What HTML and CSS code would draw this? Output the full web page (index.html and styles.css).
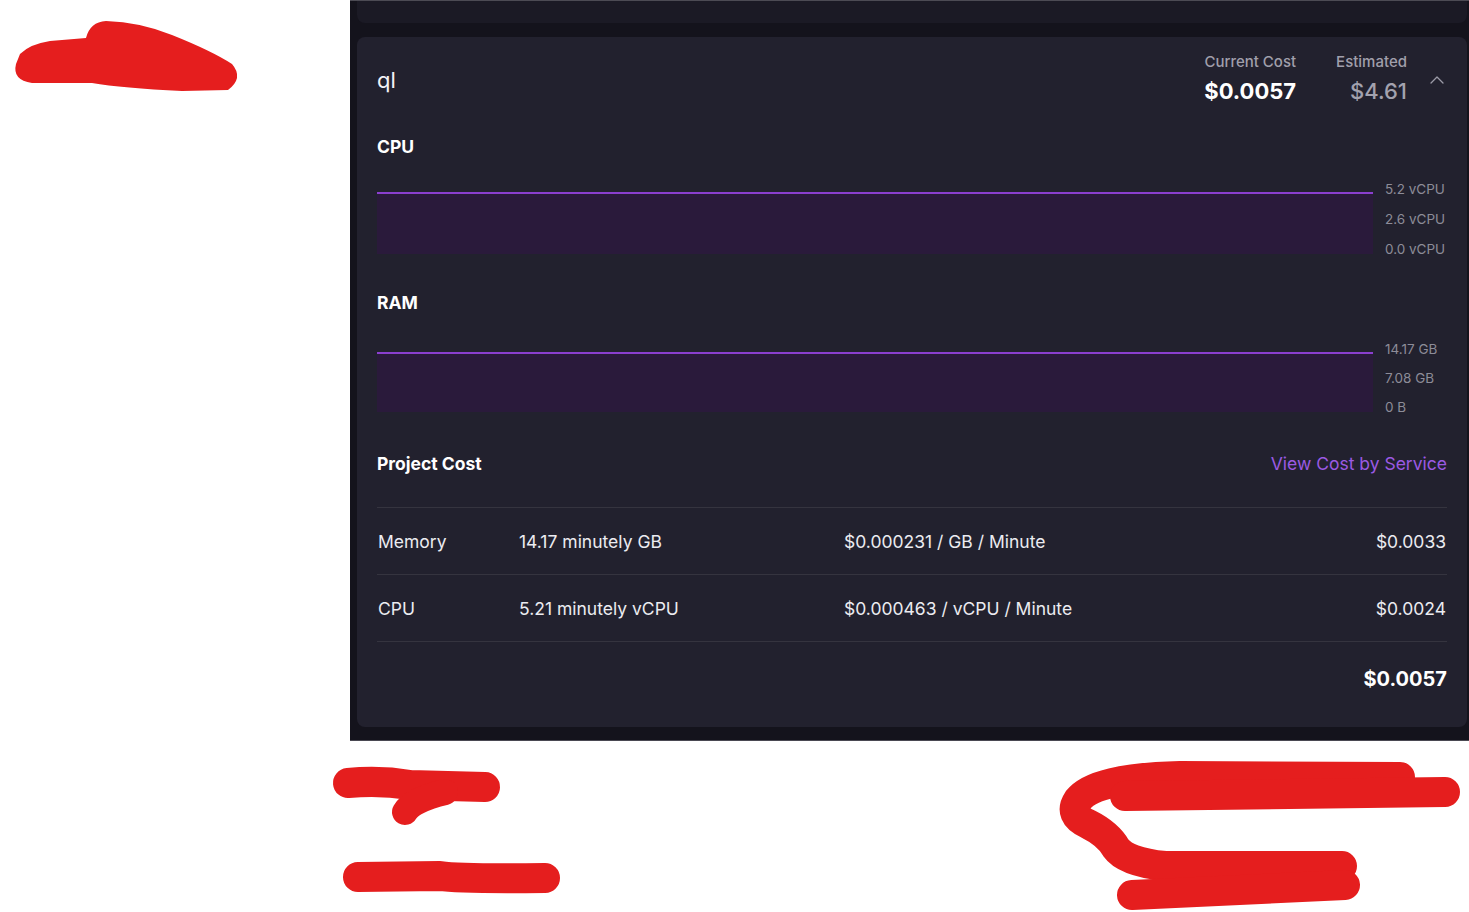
FILE: index.html
```html
<!DOCTYPE html>
<html lang="en">
<head>
<meta charset="utf-8">
<title>Usage</title>
<link rel="stylesheet" href="styles.css">
</head>
<body>
<div class="page">
  <div class="panel">
    <div class="prev-card"></div>
    <div class="card">
      <div class="card-header">
        <div class="title">ql</div>
        <div class="stats">
          <div class="stat">
            <div class="stat-label">Current Cost</div>
            <div class="stat-value">$0.0057</div>
          </div>
          <div class="stat">
            <div class="stat-label">Estimated</div>
            <div class="stat-value stat-value--muted">$4.61</div>
          </div>
          <svg class="chevron" width="16" height="16" viewBox="0 0 16 16"><path d="M2 11 L8 5 L14 11" fill="none" stroke="#9c9ba7" stroke-width="1.3" stroke-linecap="round" stroke-linejoin="round"/></svg>
        </div>
      </div>

      <div class="metric metric--cpu">
        <div class="metric-label">CPU</div>
        <div class="chart">
          <div class="plot"><div class="plot-fill"></div></div>
          <div class="axis">
            <span>5.2 vCPU</span>
            <span>2.6 vCPU</span>
            <span>0.0 vCPU</span>
          </div>
        </div>
      </div>

      <div class="metric metric--ram">
        <div class="metric-label">RAM</div>
        <div class="chart">
          <div class="plot"><div class="plot-fill"></div></div>
          <div class="axis">
            <span>14.17 GB</span>
            <span>7.08 GB</span>
            <span>0 B</span>
          </div>
        </div>
      </div>

      <div class="cost-header">
        <div class="metric-label">Project Cost</div>
        <a class="cost-link" href="#">View Cost by Service</a>
      </div>

      <div class="cost-table">
        <div class="cost-row">
          <span>Memory</span>
          <span>14.17 minutely GB</span>
          <span>$0.000231 / GB / Minute</span>
          <span class="amount">$0.0033</span>
        </div>
        <div class="cost-row">
          <span>CPU</span>
          <span>5.21 minutely vCPU</span>
          <span>$0.000463 / vCPU / Minute</span>
          <span class="amount">$0.0024</span>
        </div>
        <div class="cost-total">$0.0057</div>
      </div>
    </div>
  </div>

  <svg class="scribbles" width="1469" height="912" viewBox="0 0 1469 912">
    <path d="M20 54 Q30 44 50 41 L86 38 Q90 22 106 21 Q140 22 172 35 Q212 51 232 64 Q244 78 228 90 L182 91 Q122 88 92 83 L32 83 Q12 80 16 64 Z" fill="#e51e1e"/>
    <g fill="none" stroke="#e51e1e" stroke-linecap="round" stroke-linejoin="round">
      <path d="M348 783 Q380 780 410 785 L485 787" stroke-width="30"/>
      <path d="M405 812 Q412 800 445 792" stroke-width="26"/>
      <path d="M358 877 L440 876 Q460 879 545 878" stroke-width="30"/>
      <path d="M1400 777 L1180 776 Q1095 778 1078 800 Q1068 815 1088 824 Q1108 834 1116 848 Q1126 862 1165 866 L1342 866" stroke-width="30"/>
      <path d="M1125 796 L1445 792" stroke-width="30"/>
      <path d="M1132 895 L1345 885" stroke-width="30"/>
    </g>
  </svg>
</div>
</body>
</html>
```

FILE: styles.css
```css
* {
  box-sizing: border-box;
}

html, body {
  margin: 0;
  padding: 0;
  background: #ffffff;
}

body {
  font-family: Inter, "Liberation Sans", sans-serif;
  color: #ececf1;
  width: 1469px;
  height: 912px;
  overflow: hidden;
}

.page {
  position: relative;
  width: 1469px;
  height: 912px;
}

.panel {
  margin-left: 350px;
  width: 1119px;
  background: #14131c;
  border-top: 1px solid #4c4b54;
  border-bottom: 1px solid #4a4952;
  padding: 0 2px 13px 7px;
}

.prev-card {
  height: 22px;
  background: #1b1a25;
  border-radius: 0 0 8px 8px;
  margin-bottom: 14px;
}

.card {
  background: #22212e;
  border-radius: 8px;
  padding: 16px 20px 0 20px;
  height: 690px;
}

.card-header {
  display: flex;
  align-items: center;
  justify-content: space-between;
}

.title {
  font-size: 22px;
  line-height: 28px;
  color: #f2f2f6;
}

.stats {
  display: flex;
  align-items: center;
}

.stat {
  text-align: right;
  margin-right: 40px;
}

.stat:nth-of-type(2) {
  margin-right: 22px;
}

.stat-label {
  font-size: 15px;
  line-height: 18px;
  font-weight: 500;
  color: #a09fab;
  margin-bottom: 4px;
}

.stat-value {
  font-size: 22px;
  line-height: 32px;
  font-weight: 700;
  color: #ffffff;
}

.stat-value--muted {
  font-weight: 500;
  color: #a3a2ae;
}

.chevron {
  display: block;
  margin-right: 2px;
}

.metric-label {
  font-size: 17.5px;
  line-height: 24px;
  font-weight: 700;
  color: #ffffff;
}

.metric--cpu {
  margin-top: 28px;
}

.metric--ram {
  margin-top: 34px;
}

.chart {
  display: flex;
  margin-top: 22px;
  height: 76px;
}

.metric--ram .chart {
  margin-top: 26px;
  height: 74px;
}

.plot {
  flex: 1;
  padding-top: 11px;
  padding-bottom: 3px;
  margin-right: 12px;
  display: flex;
}

.plot-fill {
  flex: 1;
  border-top: 2px solid #8b3fcf;
  background: #2a1a3b;
}

.axis {
  width: 62px;
  display: flex;
  flex-direction: column;
  justify-content: space-between;
  font-size: 13.5px;
  line-height: 16px;
  color: #8d8c98;
}

.cost-header {
  display: flex;
  justify-content: space-between;
  align-items: center;
  margin-top: 37px;
  padding-bottom: 31px;
  border-bottom: 1px solid #35343f;
}

.cost-link {
  font-size: 17.5px;
  line-height: 24px;
  color: #9b5ae3;
  text-decoration: none;
}

.cost-row {
  display: grid;
  grid-template-columns: 141px 325px 1fr auto;
  align-items: center;
  height: 67px;
  padding: 0 1px;
  border-bottom: 1px solid #35343f;
  font-size: 17.5px;
  color: #ececf1;
}

.amount {
  text-align: right;
}

.cost-total {
  text-align: right;
  font-size: 20px;
  font-weight: 700;
  color: #ffffff;
  line-height: 28px;
  padding-top: 23px;
}

.scribbles {
  position: absolute;
  left: 0;
  top: 0;
  pointer-events: none;
}
```
